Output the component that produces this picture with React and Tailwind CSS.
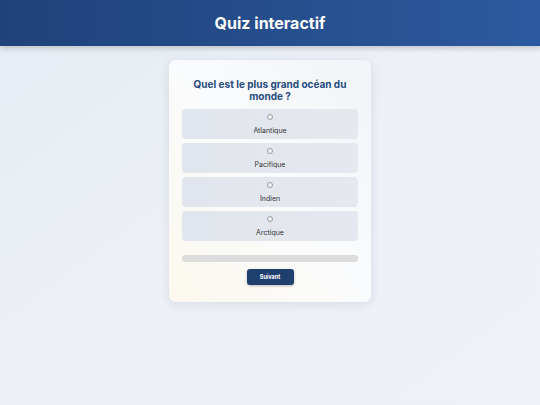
import { useState } from 'react';

const options = ['Atlantique', 'Pacifique', 'Indien', 'Arctique'];

export default function App() {
  const [choice, setChoice] = useState(null);

  return (
    <div className="min-h-[405px] bg-gradient-to-br from-[#e6ecf4] via-[#edf1f6] to-[#eef2f7] font-['Inter',sans-serif]">
      <header className="flex h-[46px] items-center justify-center bg-gradient-to-r from-[#1f4279] to-[#2c5aa0] shadow-[0_2px_6px_rgba(0,0,0,0.2)]">
        <h1 className="text-[16px] font-bold text-white">Quiz interactif</h1>
      </header>

      <div className="flex justify-center pt-[14px]">
        <div className="w-[202px] rounded-[7px] bg-gradient-to-tr from-[#fcf8ee] via-[#fafbfc] to-[#f1f4f8] px-[13px] pb-[17px] pt-[18px] shadow-[0_2px_10px_rgba(40,60,100,0.12)]">
          <h2 className="mb-[7px] text-center text-[10px] font-bold leading-[12px] text-[#264a80]">
            Quel est le plus grand océan du monde ?
          </h2>

          <div className="flex flex-col gap-[4px]">
            {options.map((opt) => (
              <label
                key={opt}
                className="flex h-[30px] cursor-pointer flex-col items-center rounded-[4px] bg-gradient-to-r from-[#e1e5ed] to-[#e5e8ee] pt-[5px]"
              >
                <input
                  type="radio"
                  name="q"
                  checked={choice === opt}
                  onChange={() => setChoice(opt)}
                  className="m-0 h-[6px] w-[6px] cursor-pointer opacity-70"
                />
                <span className="mt-[6px] text-[7px] leading-[9px] text-[#333]">{opt}</span>
              </label>
            ))}
          </div>

          <div className="mt-[14px] h-[7px] rounded-full bg-[#dcdcdc]" />

          <div className="mt-[7px] flex justify-center">
            <button className="h-[16px] w-[47px] rounded-[3px] bg-[#1f3f6e] text-[5.5px] font-bold text-white shadow-[0_1px_3px_rgba(0,0,0,0.25)]">
              Suivant
            </button>
          </div>
        </div>
      </div>
    </div>
  );
}
